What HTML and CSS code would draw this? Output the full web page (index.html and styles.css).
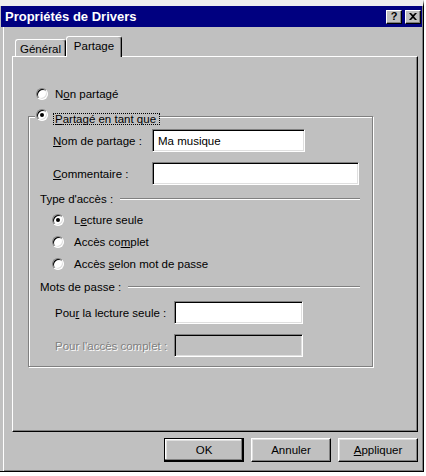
FILE: index.html
```html
<!DOCTYPE html>
<html lang="fr">
<head>
<meta charset="utf-8">
<title>Propriétés de Drivers</title>
<link rel="stylesheet" href="styles.css">
</head>
<body>
<div class="window">
  <div class="titlebar">
    <span class="title">Propriétés de Drivers</span>
    <div class="tb-buttons">
      <span class="tb-btn help">?</span>
      <span class="tb-btn close"><svg width="8" height="7" viewBox="0 0 8 7"><path d="M0 0h2l2 2 2-2h2L5 3.5 8 7H6L4 5 2 7H0l3-3.5z" fill="#000"/></svg></span>
    </div>
  </div>
  <div class="body">
    <div class="tabs">
      <div class="tab">Général</div>
      <div class="tab active">Partage</div>
    </div>
    <div class="panel">
      <div class="opt top-opt"><span class="radio"></span><span class="opt-text">N<u>o</u>n partagé</span></div>
      <fieldset class="group">
        <legend class="legend"><span class="radio on"></span><span class="focus"><u>P</u>artagé en tant que</span></legend>
        <div class="form-grid share-grid">
          <span class="lbl"><u>N</u>om de partage :</span>
          <input class="field name-field" type="text" value="Ma musique">
          <span class="lbl"><u>C</u>ommentaire :</span>
          <input class="field comment-field" type="text" value="">
        </div>
        <div class="sub-head"><span>Type d'accès :</span><span class="etch"></span></div>
        <div class="radios">
          <div class="opt"><span class="radio on"></span><span class="opt-text wide">L<u>e</u>cture seule</span></div>
          <div class="opt"><span class="radio"></span><span class="opt-text wide">Accès co<u>m</u>plet</span></div>
          <div class="opt"><span class="radio"></span><span class="opt-text wide">Accès <u>s</u>elon mot de passe</span></div>
        </div>
        <div class="sub-head pw-head"><span>Mots de passe :</span><span class="etch"></span></div>
        <div class="form-grid pw-grid">
          <span class="lbl">Pou<u>r</u> la lecture seule :</span>
          <input class="field pw-field" type="password" value="">
          <span class="lbl disabled">Pour l'accès complet :</span>
          <input class="field pw-field off" type="password" value="" disabled>
        </div>
      </fieldset>
    </div>
    <div class="actions">
      <button class="btn default">OK</button>
      <button class="btn">Annuler</button>
      <button class="btn"><u>A</u>ppliquer</button>
    </div>
  </div>
</div>
</body>
</html>
```
FILE: styles.css
```css
html, body {
  margin: 0;
  padding: 0;
  background: #ffffff;
}
body {
  font-family: "Liberation Sans", Arial, sans-serif;
  font-size: 11.5px;
  color: #000;
}
.window {
  width: 424px;
  height: 472px;
  box-sizing: border-box;
  background: #c0c0c0;
  border-top: 6px solid #eeeeee;
  border-right: 1px solid #000;
  border-bottom: 1px solid #000;
  box-shadow: inset -1px -1px 0 #808080;
}
.titlebar {
  height: 21px;
  margin: 0 1px;
  background: #000080;
  display: flex;
  align-items: center;
  justify-content: space-between;
  padding: 0 1px 0 4px;
}
.title {
  color: #fff;
  font-weight: bold;
  font-size: 13px;
}
.tb-buttons {
  display: flex;
  gap: 3px;
}
.tb-btn {
  width: 16px;
  height: 14px;
  box-sizing: border-box;
  background: #c0c0c0;
  border: 1px solid;
  border-color: #fff #000 #000 #fff;
  box-shadow: inset -1px -1px 0 #808080;
  display: flex;
  align-items: center;
  justify-content: center;
  font-weight: bold;
  font-size: 11px;
  line-height: 1;
}
.body {
  padding: 9px 5px 0 12px;
  box-shadow: inset 3px 0 0 #c0c0c0, inset 4px 0 0 #fff;
  height: 444px;
  box-sizing: border-box;
}
.tabs {
  display: flex;
  align-items: flex-end;
  padding-left: 3px;
}
.tab {
  width: 51px;
  height: 17px;
  box-sizing: border-box;
  border-top: 1px solid #fff;
  border-left: 1px solid #fff;
  border-right: 1px solid #000;
  border-radius: 3px 3px 0 0;
  box-shadow: inset -1px 0 0 #808080;
  display: flex;
  align-items: center;
  justify-content: center;
  padding-top: 1px;
}
.tab.active {
  width: 56px;
  height: 21px;
  margin-bottom: -1px;
  background: #c0c0c0;
  position: relative;
  z-index: 1;
  padding-top: 0;
  padding-bottom: 3px;
}
.panel {
  height: 376px;
  box-sizing: border-box;
  border: 1px solid;
  border-color: #fff #000 #000 #fff;
  box-shadow: inset -1px -1px 0 #808080;
  padding-top: 30px;
}
.opt {
  display: flex;
  align-items: center;
  height: 14px;
}
.top-opt {
  padding-left: 23px;
}
.opt-text {
  margin-left: 7px;
}
.opt-text.wide {
  margin-left: 10px;
}
.radio {
  width: 12px;
  height: 12px;
  box-sizing: border-box;
  border-radius: 50%;
  background: #fff;
  border: 1px solid;
  border-color: #808080 #fff #fff #808080;
  box-shadow: inset 1px 1px 0 #000, inset -1px -1px 0 #dfdfdf;
  display: flex;
  align-items: center;
  justify-content: center;
  flex: none;
}
.radio.on::after {
  content: "";
  width: 4px;
  height: 4px;
  border-radius: 50%;
  background: #000;
}
.group {
  width: 345px;
  box-sizing: border-box;
  margin: 8px 0 0 15px;
  padding: 0 0 9px 0;
  border: 1px solid #808080;
  box-shadow: inset 1px 1px 0 #fff, 1px 1px 0 #fff;
}
.legend {
  display: flex;
  align-items: center;
  height: 15px;
  padding: 0;
  margin-left: 6px;
  background: #c0c0c0;
}
.legend .radio {
  margin-left: 1px;
  margin-top: -3px;
}
.focus {
  margin-left: 5px;
  border: 1px dotted #000;
  padding: 0 3px 0 1px;
  line-height: 10px;
  height: 10px;
  margin-top: 4px;
}
.form-grid {
  display: grid;
  align-items: center;
  row-gap: 10px;
}
.share-grid {
  margin-top: 5px;
  padding-left: 24px;
  grid-template-columns: 99px auto;
}
.pw-grid {
  margin-top: 7px;
  padding-left: 26px;
  grid-template-columns: 119px auto;
}
.field {
  height: 23px;
  box-sizing: border-box;
  margin: 0;
  padding: 0 5px;
  background: #fff;
  border: 1px solid;
  border-color: #808080 #fff #fff #808080;
  box-shadow: inset 1px 1px 0 #000, inset -1px -1px 0 #dfdfdf;
  font-family: "Liberation Sans", Arial, sans-serif;
  font-size: 11.5px;
  color: #000;
  outline: none;
  border-radius: 0;
}
.name-field { width: 153px; }
.comment-field { width: 207px; }
.pw-field { width: 129px; }
.field.off { background: #c0c0c0; }
.disabled {
  color: #808080;
  text-shadow: 1px 1px 0 #fff;
}
.sub-head {
  display: flex;
  align-items: center;
  height: 14px;
  margin-top: 7px;
  padding-left: 11px;
  margin-right: 12px;
}
.pw-head {
  margin-top: 9px;
}
.etch {
  flex: 1;
  margin-left: 7px;
  border-top: 1px solid #808080;
  border-bottom: 1px solid #fff;
}
.radios {
  display: flex;
  flex-direction: column;
  gap: 8px;
  margin-top: 7px;
  padding-left: 23px;
}
.actions {
  display: flex;
  justify-content: flex-end;
  gap: 7px;
  margin-top: 6px;
}
.btn {
  width: 80px;
  height: 24px;
  box-sizing: border-box;
  margin: 0;
  padding: 0;
  background: #c0c0c0;
  border: 1px solid;
  border-color: #fff #000 #000 #fff;
  box-shadow: inset -1px -1px 0 #808080, inset 1px 1px 0 #dfdfdf;
  font-family: "Liberation Sans", Arial, sans-serif;
  font-size: 11.5px;
  color: #000;
  border-radius: 0;
}
.btn.default {
  border-color: #000;
  box-shadow: inset -1px -1px 0 #000, inset -2px -2px 0 #808080, inset 1px 1px 0 #fff, inset 2px 2px 0 #dfdfdf;
}
```
